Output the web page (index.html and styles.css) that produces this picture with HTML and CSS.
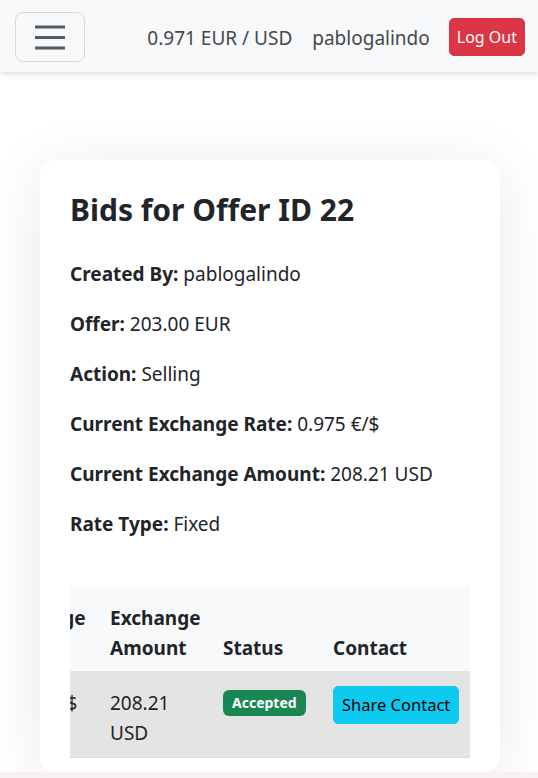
FILE: index.html
```html
<!DOCTYPE html>
<html lang="en">
<head>
<meta charset="utf-8">
<title>Bids for Offer ID 22</title>
<link rel="stylesheet" href="styles.css">
</head>
<body>
<nav class="navbar">
  <button class="toggler" type="button" aria-label="Toggle navigation">
    <svg width="32" height="26" viewBox="0 0 32 26" aria-hidden="true">
      <path d="M1 3h30M1 13.5h30M1 24h30" stroke="#555a5e" stroke-width="3" fill="none"/>
    </svg>
  </button>
  <div class="nav-right">
    <span class="nav-text">0.971 EUR / USD</span>
    <span class="nav-text">pablogalindo</span>
    <button class="btn btn-danger" type="button">Log Out</button>
  </div>
</nav>

<main class="page">
  <section class="card">
    <h2 class="title">Bids for Offer ID 22</h2>
    <p><strong>Created By:</strong> pablogalindo</p>
    <p><strong>Offer:</strong> 203.00 EUR</p>
    <p><strong>Action:</strong> Selling</p>
    <p><strong>Current Exchange Rate:</strong> 0.975 €/$</p>
    <p><strong>Current Exchange Amount:</strong> 208.21 USD</p>
    <p><strong>Rate Type:</strong> Fixed</p>

    <div class="table-wrap">
      <table class="bids">
        <colgroup>
          <col class="c-bidder">
          <col class="c-rate">
          <col class="c-amount">
          <col class="c-status">
          <col class="c-contact">
        </colgroup>
        <thead>
          <tr>
            <th>Bidder</th>
            <th>Exchange Rate</th>
            <th>Exchange Amount</th>
            <th>Status</th>
            <th>Contact</th>
          </tr>
        </thead>
        <tbody>
          <tr>
            <td class="cell-text">pablogalindo</td>
            <td class="cell-text">0.975 €/$</td>
            <td class="cell-text">208.21 USD</td>
            <td class="cell-badge"><span class="badge">Accepted</span></td>
            <td class="cell-btn"><button class="btn btn-info" type="button">Share Contact</button></td>
          </tr>
        </tbody>
      </table>
    </div>
  </section>
</main>
<footer class="footer"></footer>
</body>
</html>
```

FILE: styles.css
```css
* { box-sizing: border-box; }

html, body {
  margin: 0;
  padding: 0;
}

body {
  font-family: "Noto Sans", "Open Sans", sans-serif;
  font-size: 19px;
  line-height: 30px;
  color: #212529;
  background: #ffffff;
  overflow: hidden;
}

.navbar {
  height: 72px;
  background: #f8f9fa;
  box-shadow: 0 2px 6px rgba(0, 0, 0, 0.14);
  display: flex;
  align-items: center;
  justify-content: space-between;
  padding: 0 13px 0 15px;
  position: relative;
  z-index: 2;
}

.toggler {
  width: 70px;
  height: 50px;
  border: 1px solid #d7d9db;
  border-radius: 8px;
  background: transparent;
  display: flex;
  align-items: center;
  justify-content: center;
  padding: 0;
  margin-top: 2px;
}

.nav-right {
  display: flex;
  align-items: center;
  gap: 20px;
}

.nav-text {
  color: #45484b;
  font-size: 19px;
  position: relative;
  top: 2px;
}

.nav-text + .btn {
  margin-left: -1px;
}

.btn {
  font-family: inherit;
  font-size: 16px;
  line-height: 26px;
  padding: 5px 7px;
  border-radius: 5px;
  border: 1px solid transparent;
  cursor: pointer;
  white-space: nowrap;
}

.btn-danger {
  background: #dc3545;
  border-color: #dc3545;
  color: #ffffff;
  margin-top: 2px;
}

.btn-info {
  background: #0dcaf0;
  border-color: #0dcaf0;
  color: #000000;
  padding: 5px 8px;
  font-size: 16.5px;
}

.page {
  padding: 88px 38px 0 40px;
}

.card {
  background: #ffffff;
  border-radius: 15px;
  box-shadow: 0 8px 60px rgba(0, 0, 0, 0.09);
  padding: 31px 30px 14px;
}

.title {
  font-size: 30px;
  line-height: 37px;
  font-weight: 700;
  margin: 0 0 31px;
}

p {
  margin: 0 0 20px;
}

strong {
  font-weight: 700;
}

.table-wrap {
  margin-top: 48px;
  overflow: hidden;
}

.bids {
  table-layout: fixed;
  border-collapse: collapse;
  width: 615px;
  margin-left: -215px;
}

.c-bidder { width: 130px; }
.c-rate { width: 115px; }
.c-amount { width: 113px; }
.c-status { width: 110px; }
.c-contact { width: 147px; }

.bids th,
.bids td {
  text-align: left;
  padding-left: 10px;
  padding-right: 10px;
}

.bids th {
  font-weight: 700;
  vertical-align: bottom;
  background: #f8f9fa;
  border-bottom: 1px solid #dee2e6;
  padding-top: 16px;
  padding-bottom: 8px;
}

.bids td {
  vertical-align: top;
  background: #e4e4e4;
  border-bottom: 1px solid #dadce6;
  padding-bottom: 9px;
}

.bids td.cell-text { padding-top: 16px; }
.bids td.cell-badge { padding-top: 18px; }
.bids td.cell-btn { padding-top: 14px; }

.badge {
  display: inline-block;
  vertical-align: top;
  background: #198754;
  color: #ffffff;
  font-size: 14px;
  font-weight: 700;
  line-height: 16px;
  padding: 5px 9px;
  border-radius: 6px;
}

.btn-info {
  vertical-align: top;
}

.footer {
  height: 40px;
  background: #f7f1f1;
}
```
